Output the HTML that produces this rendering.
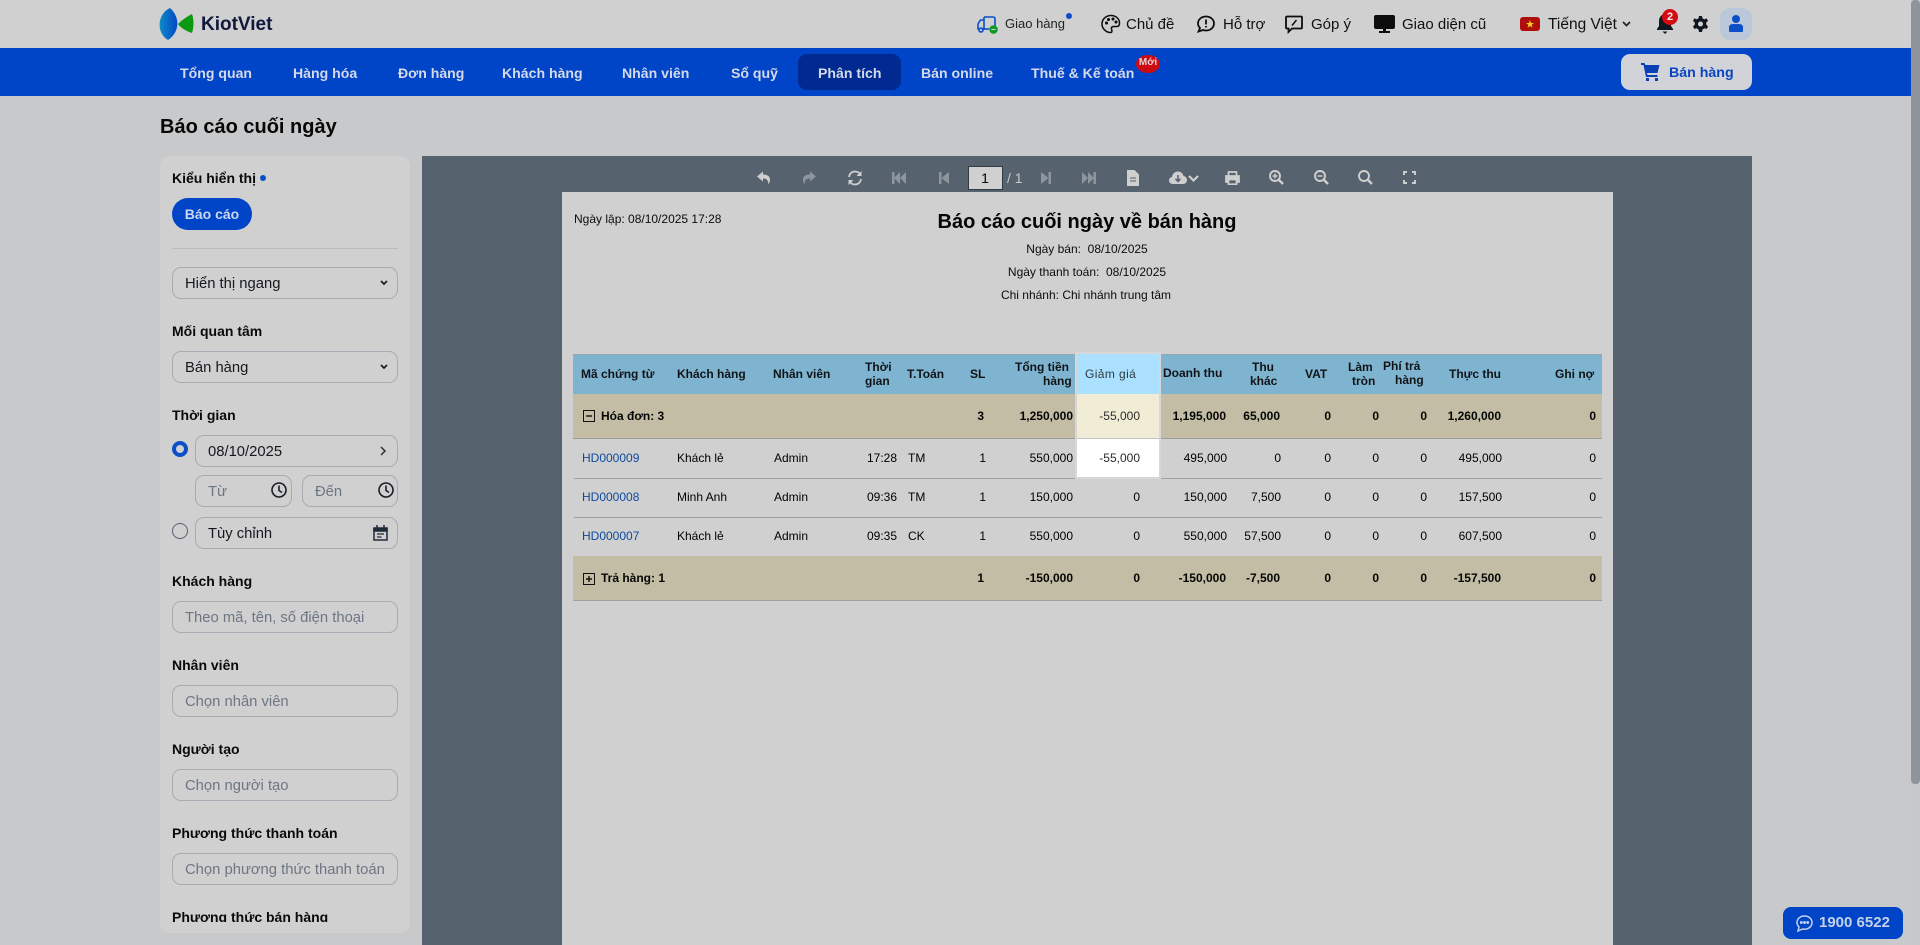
<!DOCTYPE html>
<html lang="vi"><head><meta charset="utf-8"><title>Báo cáo cuối ngày</title>
<style>
*{box-sizing:border-box}
html,body{margin:0;padding:0;width:1920px;height:945px;overflow:hidden;background:#c8c9cb;font-family:"Liberation Sans",Arial,sans-serif;color:#0d0d0d}
.box{position:absolute}
.t{position:absolute;white-space:nowrap;line-height:20px;height:20px}
svg{position:absolute;overflow:visible}
.nav{font-size:14.1px;font-weight:bold;color:#d4dae9;top:63px}
.top{font-size:15px;top:15px;color:#111}
.lb{font-size:14px;font-weight:bold;color:#0a0a0a;left:172px}
.inp{position:absolute;border:1px solid #a8abb3;border-radius:9px;height:32px;font-size:14.8px;line-height:32px;padding-left:12px;white-space:nowrap;color:#15181d}
.inp.d{line-height:33px}
.ph{color:#6d7683}
.rp{font-size:12px;color:#0c0c0c}
.h{position:absolute;font-size:12px;font-weight:bold;line-height:14px;height:14px;white-space:nowrap;color:#101418}
.r{position:absolute;left:0;width:1920px;height:20px;line-height:20px;font-size:12px;color:#000}
.r span{position:absolute;white-space:nowrap}
.b span{font-weight:bold;color:#050505}
.b span.g{font-weight:normal;color:#2c2c2c}
.b .dt,.b .tt,.b .th{margin-right:1px}
.sl{right:934px}.tg{right:847px}.gi{right:780px}.gh{color:#2a2a2a}.dt{right:693px}.th{right:639px}.va{right:589px}.la{right:541px}.ph2{right:493px}.tt{right:418px}.gn{right:324px}
.ma{left:582px;color:#0d4a9c}.kh{left:677px}.nv{left:774px}.tm{right:1023px}.to{left:908px}
</style></head><body>

<!-- top bar -->
<div class="box" style="left:0;top:0;width:1920px;height:48px;background:#d0d0d0"></div>
<svg style="left:0;top:0" width="300" height="48">
<defs><linearGradient id="lg" x1="0" x2="1" y1="0" y2="0"><stop offset="0" stop-color="#0f8cc4"/><stop offset="1" stop-color="#0048c8"/></linearGradient></defs>
<path d="M170 8C157 14 156 33 168 40C179 33 181 18 170 8Z" fill="url(#lg)"/>
<path d="M192 14C186 17 181 21 178 24C181 28 186 31 192 33C194 27 194 20 192 14Z" fill="#0a9a12"/>
</svg>
<div class="t" style="left:201px;top:15px;font-size:19px;font-weight:bold;color:#10183c">KiotViet</div>

<svg style="left:977px;top:14px" width="22" height="20" fill="none" stroke="#0a4fc8" stroke-width="1.6"><path d="M7 3H16Q18 3 18 5V12"/><path d="M7 3V15H4.500"/><path d="M7 6H3.500L1 10V15H2"/><circle cx="4" cy="16" r="2"/><path d="M7 15H12"/><circle cx="16.500" cy="15.500" r="3.500" fill="#0e9a24" stroke="#0e9a24"/><path d="M14.500 15.500H18.500" stroke="#d0d0d0" stroke-width="1"/></svg>
<div class="t" style="left:1005px;top:14px;font-size:13px;color:#222">Giao hàng</div>
<div class="box" style="left:1066px;top:13px;width:6px;height:6px;border-radius:50%;background:#0a4fc8"></div>

<svg style="left:1101px;top:14px" width="20" height="20" fill="none" stroke="#0d0d0d" stroke-width="1.500"><path d="M10 1.500C4.500 1.500 1 5.500 1 10C1 14.500 5 18.500 9.500 18.500C11.500 18.500 11 16.500 10.500 15C10 13 11.500 12.500 13 12.500H16C18 12.500 18.500 11 18.500 9C18.500 5 15 1.500 10 1.500Z"/><circle cx="5.500" cy="9" r=".8" fill="#0d0d0d"/><circle cx="7.500" cy="5.500" r=".8" fill="#0d0d0d"/><circle cx="12" cy="5" r=".8" fill="#0d0d0d"/><circle cx="15" cy="8" r=".8" fill="#0d0d0d"/></svg>
<div class="t top" style="left:1126px">Chủ đề</div>

<svg style="left:1197px;top:15px" width="18" height="18" fill="none" stroke="#0d0d0d" stroke-width="1.800"><path d="M9 1.500C4.500 1.500 1 4.500 1 8.500C1 10.500 2 12 3 13L1.500 16.500L6 15C7 15.400 8 15.500 9 15.500C13.500 15.500 17 12.500 17 8.500C17 4.500 13.500 1.500 9 1.500Z"/><path d="M9 4.500V9.500M9 11V12.500"/></svg>
<div class="t top" style="left:1223px">Hỗ trợ</div>

<svg style="left:1285px;top:15px" width="18" height="18" fill="none" stroke="#0d0d0d" stroke-width="1.800"><path d="M2 1.500H16Q17 1.500 17 2.500V12.500Q17 13.500 16 13.500H7L3.500 17V13.500H2Q1 13.500 1 12.500V2.500Q1 1.500 2 1.500Z"/><path d="M7 10.500L11.500 5" stroke-width="1.500"/></svg>
<div class="t top" style="left:1311px">Góp ý</div>

<svg style="left:1374px;top:15px" width="21" height="18"><path d="M2 0H19Q21 0 21 2V12Q21 14 19 14H2Q0 14 0 12V2Q0 0 2 0Z" fill="#0d0d0d"/><rect x="9" y="14" width="3" height="3" fill="#0d0d0d"/><rect x="5" y="16" width="11" height="2" fill="#0d0d0d"/></svg>
<div class="t top" style="left:1402px">Giao diện cũ</div>

<div class="box" style="left:1520px;top:17px;width:20px;height:14px;border-radius:3px;background:#b00d0d"></div>
<svg style="left:1520px;top:17px" width="20" height="14"><path d="M10 3L11 6H14L11.600 7.800L12.500 10.800L10 9L7.500 10.800L8.400 7.800L6 6H9Z" fill="#f0d020"/></svg>
<div class="t top" style="left:1548px;font-size:15.500px">Tiếng Việt</div>
<svg style="left:1622px;top:21px" width="9" height="6" fill="none" stroke="#222" stroke-width="1.700"><path d="M1 1L4.500 4.500L8 1"/></svg>

<svg style="left:1656px;top:13px" width="18" height="22"><path d="M9 1C6 1 3 4 3 8V13L1 16V17H17V16L15 13V8C15 4 12 1 9 1Z" fill="#0f1720"/><path d="M6.500 18.500H11.500L9 21Z" fill="#0f1720"/></svg>
<div class="box" style="left:1662px;top:9px;width:16px;height:16px;border-radius:50%;background:#d60b12;color:#eee;font-size:11px;font-weight:bold;text-align:center;line-height:16px">2</div>

<svg style="left:1693px;top:16px" width="15" height="16"><path d="M6 0H9L9.500 2.400L11.500 3.400L13.600 2.300L15 5L13.200 6.500V8.500L15 10.500L13.600 13L11.500 12.300L9.500 13.500L9 16H6L5.500 13.500L3.500 12.300L1.400 13L0 10.500L1.800 8.500V6.500L0 5L1.400 2.300L3.500 3.400L5.500 2.400Z" fill="#10161f"/><circle cx="7.500" cy="8" r="2.500" fill="#d0d0d0"/></svg>

<div class="box" style="left:1720px;top:8px;width:32px;height:32px;border-radius:10px;background:#bac8da"></div>
<svg style="left:1729px;top:15px" width="14" height="17"><circle cx="7" cy="4" r="4" fill="#0a4fc8"/><path d="M0 16V12C0 10 2 9 4 9H10C12 9 14 10 14 12V16Q14 17 13 17H1Q0 17 0 16Z" fill="#0a4fc8"/></svg>

<!-- nav -->
<div class="box" style="left:0;top:48px;width:1920px;height:48px;background:#0044c8"></div>
<div class="box" style="left:798px;top:54px;width:103px;height:36px;border-radius:9px;background:#002a91"></div>
<div class="t nav" style="left:180px">Tổng quan</div>
<div class="t nav" style="left:293px">Hàng hóa</div>
<div class="t nav" style="left:398px">Đơn hàng</div>
<div class="t nav" style="left:502px">Khách hàng</div>
<div class="t nav" style="left:622px">Nhân viên</div>
<div class="t nav" style="left:731px">Sổ quỹ</div>
<div class="t nav" style="left:818px">Phân tích</div>
<div class="t nav" style="left:921px">Bán online</div>
<div class="t nav" style="left:1031px">Thuế &amp; Kế toán</div>
<div class="box" style="left:1136px;top:55px;width:24px;height:18px;border-radius:50%;background:#cc0a12;color:#e6d5d5;font-size:10px;font-weight:bold;text-align:center;line-height:15px">Mới</div>
<div class="box" style="left:1621px;top:54px;width:131px;height:36px;border-radius:9px;background:#d1d3d9"></div>
<svg style="left:1641px;top:62px" width="19" height="19"><path d="M0 1H3.500L4.500 3H18.500L16.500 11H6L6.500 13H16.500V15H5L2.500 3H0Z" fill="#0a3fb5"/><rect x="5" y="16" width="3" height="3" fill="#0a3fb5"/><rect x="14" y="16" width="3" height="3" fill="#0a3fb5"/></svg>
<div class="t" style="left:1669px;top:63px;font-size:14.200px;font-weight:bold;color:#0a45c0">Bán hàng</div>

<!-- title -->
<div class="t" style="left:160px;top:117px;font-size:20px;font-weight:bold;color:#070707">Báo cáo cuối ngày</div>

<!-- sidebar -->
<div class="box" style="left:160px;top:156px;width:250px;height:777px;border-radius:10px;background:#d0d0d0"></div>
<div class="t lb" style="top:168px">Kiểu hiển thị</div>
<div class="box" style="left:260px;top:175px;width:6px;height:6px;border-radius:50%;background:#0a4fc8"></div>
<div class="box" style="left:172px;top:198px;width:80px;height:32px;border-radius:16px;background:#0044c8;color:#cbd8f0;font-size:14px;font-weight:bold;text-align:center;line-height:33px">Báo cáo</div>
<div class="box" style="left:172px;top:248px;width:226px;height:1px;background:#bbbcc0"></div>

<div class="inp" style="left:172px;top:267px;width:226px">Hiển thị ngang</div>
<svg style="left:380px;top:280px" width="8" height="6" fill="none" stroke="#1a1e25" stroke-width="1.700"><path d="M1 1L4 4L7 1"/></svg>
<div class="t lb" style="top:321px">Mối quan tâm</div>
<div class="inp" style="left:172px;top:351px;width:226px">Bán hàng</div>
<svg style="left:380px;top:364px" width="8" height="6" fill="none" stroke="#1a1e25" stroke-width="1.700"><path d="M1 1L4 4L7 1"/></svg>
<div class="t lb" style="top:405px">Thời gian</div>

<div class="box" style="left:172px;top:441px;width:16px;height:16px;border-radius:50%;border:4.500px solid #0a4fc8;background:#d0d0d0"></div>
<div class="inp d" style="left:195px;top:435px;width:203px">08/10/2025</div>
<svg style="left:380px;top:446px" width="6" height="10" fill="none" stroke="#2a3038" stroke-width="1.500"><path d="M1 1L5 5L1 9"/></svg>
<div class="inp ph d" style="left:195px;top:475px;width:97px">Từ</div>
<svg style="left:271px;top:482px" width="16" height="16" fill="none" stroke="#1a1e25" stroke-width="1.600"><circle cx="8" cy="8" r="7"/><path d="M8 3.500V8.500L11 10.500"/></svg>
<div class="inp ph d" style="left:302px;top:475px;width:96px">Đến</div>
<svg style="left:378px;top:482px" width="16" height="16" fill="none" stroke="#1a1e25" stroke-width="1.600"><circle cx="8" cy="8" r="7"/><path d="M8 3.500V8.500L11 10.500"/></svg>
<div class="box" style="left:172px;top:523px;width:16px;height:16px;border-radius:50%;border:1.300px solid #55606e"></div>
<div class="inp d" style="left:195px;top:517px;width:203px">Tùy chỉnh</div>
<svg style="left:373px;top:525px" width="15" height="16" fill="none" stroke="#1f2a38" stroke-width="1.500"><path d="M1 3.500H14V15H1Z"/><path d="M1 3H14V6H1Z" fill="#1f2a38"/><path d="M4 0V3M11 0V3"/><path d="M4 9H11M4 12H8.500" stroke-width="1.200"/></svg>

<div class="t lb" style="top:571px">Khách hàng</div>
<div class="inp ph d" style="left:172px;top:601px;width:226px">Theo mã, tên, số điện thoại</div>
<div class="t lb" style="top:655px">Nhân viên</div>
<div class="inp ph" style="left:172px;top:685px;width:226px">Chọn nhân viên</div>
<div class="t lb" style="top:739px">Người tạo</div>
<div class="inp ph" style="left:172px;top:769px;width:226px">Chọn người tạo</div>
<div class="t lb" style="top:823px">Phương thức thanh toán</div>
<div class="inp ph" style="left:172px;top:853px;width:226px">Chọn phương thức thanh toán</div>
<div class="box" style="left:172px;top:905px;width:226px;height:17px;overflow:hidden"><div class="t lb" style="left:0;top:2px">Phương thức bán hàng</div></div>

<!-- report viewer -->
<div class="box" style="left:422px;top:156px;width:1330px;height:789px;background:#56626e"></div>
<div class="box" style="left:562px;top:192px;width:1051px;height:753px;background:#d0d0d0"></div>

<!-- toolbar -->
<svg style="left:757px;top:171px" width="14" height="14" fill="#cfcfcf"><path d="M6 0.500L0 5.500L6 10.500V7.500C9.500 7.500 11 8.500 11.500 13.500C14.500 8 13 3.500 6 3.500Z"/></svg>
<svg style="left:802px;top:171px" width="14" height="14" fill="#8d959d"><path d="M8 0.500L14 5.500L8 10.500V7.500C4.500 7.500 3 8.500 2.500 13.500C-.500 8 1 3.500 8 3.500Z"/></svg>
<svg style="left:847px;top:170px" width="16" height="16" fill="none" stroke="#cfcfcf" stroke-width="1.700"><path d="M2 7C2.500 3.500 5 1.500 8 1.500C10.500 1.500 12.500 3 13.500 4.500"/><path d="M14.500 1V6H9.500Z" fill="#cfcfcf" stroke="none"/><path d="M14 9C13.500 12.500 11 14.500 8 14.500C5.500 14.500 3.500 13 2.500 11.500"/><path d="M1.500 15V10H6.500Z" fill="#cfcfcf" stroke="none"/></svg>
<svg style="left:892px;top:172px" width="14" height="12" fill="#8d959d"><rect y="0" width="2.500" height="12"/><path d="M8 0V12L2 6Z"/><path d="M14 0V12L8 6Z"/></svg>
<svg style="left:939px;top:172px" width="10" height="12" fill="#8d959d"><rect y="0" width="2.500" height="12"/><path d="M10 0V12L2.500 6Z"/></svg>
<svg style="left:1041px;top:172px" width="10" height="12" fill="#8d959d"><rect x="7.500" y="0" width="2.500" height="12"/><path d="M0 0V12L7.500 6Z"/></svg>
<svg style="left:1082px;top:172px" width="14" height="12" fill="#8d959d"><rect x="11.500" y="0" width="2.500" height="12"/><path d="M0 0V12L6 6Z"/><path d="M6 0V12L12 6Z"/></svg>
<svg style="left:1127px;top:170px" width="12" height="16"><path d="M0 0H7.500L12 4.500V16H0Z" fill="#cfcfcf"/><path d="M3 8H9M3 11H9" stroke="#56626e" stroke-width="1"/></svg>
<svg style="left:1169px;top:171px" width="18" height="13"><path d="M4 13C1.500 13 0 11.500 0 9.500C0 7.500 1.500 6.200 3 6C3.300 3 5.500 0.500 9 0.500C12 0.500 14 2.500 14.500 5C16.500 5.300 18 7 18 9C18 11.500 16 13 14 13Z" fill="#cfcfcf"/><path d="M9 4V10M6.500 7.700L9 10.500L11.500 7.700" stroke="#56626e" stroke-width="1.500" fill="none"/></svg>
<svg style="left:1188px;top:175px" width="11" height="7" fill="none" stroke="#cfcfcf" stroke-width="2.200"><path d="M1 1L5.500 5.500L10 1"/></svg>
<svg style="left:1225px;top:171px" width="15" height="14" fill="none" stroke="#cfcfcf" stroke-width="1.700"><path d="M3.500 4.500V1H11.500V4.500"/><path d="M3.500 11H1V5H14V11H11.500" fill="#cfcfcf"/><path d="M3.500 8.500H11.500V13.200H3.500Z" fill="#56626e"/></svg>
<svg style="left:1269px;top:170px" width="15" height="15" fill="none" stroke="#cfcfcf" stroke-width="1.900"><circle cx="6" cy="6" r="5"/><path d="M9.500 9.500L14 14" stroke-width="2.400"/><path d="M3.500 6H8.500M6 3.500V8.500" stroke-width="1.500"/></svg>
<svg style="left:1314px;top:170px" width="15" height="15" fill="none" stroke="#cfcfcf" stroke-width="1.900"><circle cx="6" cy="6" r="5"/><path d="M9.500 9.500L14 14" stroke-width="2.400"/><path d="M3.500 6H8.500" stroke-width="1.500"/></svg>
<svg style="left:1358px;top:170px" width="15" height="15" fill="none" stroke="#cfcfcf" stroke-width="1.900"><circle cx="6" cy="6" r="5"/><path d="M9.500 9.500L14 14" stroke-width="2.400"/></svg>
<svg style="left:1403px;top:171px" width="13" height="13" fill="none" stroke="#cfcfcf" stroke-width="1.900"><path d="M1 4V1H4M9 1H12V4M12 9V12H9M4 12H1V9"/></svg>
<div class="box" style="left:968px;top:166px;width:35px;height:24px;background:#d0d0d0;border:1px solid #333a42;text-align:center;font-size:14px;line-height:22px;color:#000;padding-right:1px">1</div>
<div class="t" style="left:1007px;top:168px;font-size:14px;color:#c8c8c8">/ 1</div>

<!-- report header -->
<div class="t rp" style="left:574px;top:209px">Ngày lập: 08/10/2025 17:28</div>
<div class="t" style="left:787px;width:600px;text-align:center;top:212px;font-size:20px;font-weight:bold;color:#050505">Báo cáo cuối ngày về bán hàng</div>
<div class="t rp" style="left:787px;width:600px;text-align:center;top:239px">Ngày bán:&nbsp; 08/10/2025</div>
<div class="t rp" style="left:787px;width:600px;text-align:center;top:262px">Ngày thanh toán:&nbsp; 08/10/2025</div>
<div class="t rp" style="left:786px;width:600px;text-align:center;top:285px">Chi nhánh: Chi nhánh trung tâm</div>

<!-- table backgrounds -->
<div class="box" style="left:573px;top:354px;width:1029px;height:40px;background:#7fb4d0"></div>
<div class="box" style="left:573px;top:354px;width:1029px;height:1px;background:#8fa8b5"></div>
<div class="box" style="left:573px;top:394px;width:1029px;height:44px;background:#c2bda4"></div>
<div class="box" style="left:573px;top:438px;width:1029px;height:1px;background:#9c9c9c"></div>
<div class="box" style="left:574px;top:478px;width:1028px;height:1px;background:#a0a0a0"></div>
<div class="box" style="left:574px;top:517px;width:1028px;height:1px;background:#a0a0a0"></div>
<div class="box" style="left:573px;top:556px;width:1029px;height:44px;background:#c2bda4"></div>
<div class="box" style="left:573px;top:600px;width:1029px;height:1px;background:#a0a0a0"></div>

<!-- highlighted column -->
<div class="box" style="left:1075px;top:352px;width:86px;height:127px;background:#d7d7d7"></div>
<div class="box" style="left:1077px;top:354px;width:82px;height:40px;background:#abe1ff"></div>
<div class="box" style="left:1077px;top:394px;width:82px;height:44px;background:#f1ecd6"></div>
<div class="box" style="left:1077px;top:438px;width:82px;height:1px;background:#c4c4c4"></div>
<div class="box" style="left:1077px;top:439px;width:82px;height:38px;background:#fff"></div>

<!-- header text -->
<div class="h" style="left:581px;top:367px">Mã chứng từ</div>
<div class="h" style="left:677px;top:367px">Khách hàng</div>
<div class="h" style="left:773px;top:367px">Nhân viên</div>
<div class="h" style="left:865px;top:360px">Thời</div>
<div class="h" style="left:865px;top:374px">gian</div>
<div class="h" style="left:907px;top:367px">T.Toán</div>
<div class="h" style="left:970px;top:367px">SL</div>
<div class="h" style="left:1015px;top:360px">Tổng tiền</div>
<div class="h" style="left:1043px;top:374px">hàng</div>
<div class="h" style="left:1085px;top:367px;font-weight:normal;color:#2b3a44;letter-spacing:.4px">Giảm giá</div>
<div class="h" style="left:1163px;top:366px">Doanh thu</div>
<div class="h" style="left:1252px;top:360px">Thu</div>
<div class="h" style="left:1250px;top:374px">khác</div>
<div class="h" style="left:1305px;top:367px">VAT</div>
<div class="h" style="left:1348px;top:360px">Làm</div>
<div class="h" style="left:1352px;top:374px">tròn</div>
<div class="h" style="left:1383px;top:359px">Phí trả</div>
<div class="h" style="left:1395px;top:373px">hàng</div>
<div class="h" style="left:1449px;top:367px">Thực thu</div>
<div class="h" style="left:1555px;top:367px">Ghi nợ</div>

<!-- group row 1 -->
<div class="r b" style="top:406px">
<span style="left:601px">Hóa đơn: 3</span>
<span class="sl" style="margin-right:2px">3</span><span class="tg">1,250,000</span><span class="gi g">-55,000</span><span class="dt">1,195,000</span><span class="th">65,000</span><span class="va">0</span><span class="la">0</span><span class="ph2">0</span><span class="tt">1,260,000</span><span class="gn">0</span>
</div>
<svg style="left:583px;top:410px" width="12" height="12" fill="none" stroke="#111" stroke-width="1"><rect x=".5" y=".5" width="11" height="11"/><path d="M3 6H9" stroke-width="1.400"/></svg>

<!-- rows -->
<div class="r" style="top:448px"><span class="ma">HD000009</span><span class="kh">Khách lẻ</span><span class="nv">Admin</span><span class="tm">17:28</span><span class="to">TM</span><span class="sl">1</span><span class="tg">550,000</span><span class="gi gh">-55,000</span><span class="dt">495,000</span><span class="th">0</span><span class="va">0</span><span class="la">0</span><span class="ph2">0</span><span class="tt">495,000</span><span class="gn">0</span></div>
<div class="r" style="top:487px"><span class="ma">HD000008</span><span class="kh">Minh Anh</span><span class="nv">Admin</span><span class="tm">09:36</span><span class="to">TM</span><span class="sl">1</span><span class="tg">150,000</span><span class="gi">0</span><span class="dt">150,000</span><span class="th">7,500</span><span class="va">0</span><span class="la">0</span><span class="ph2">0</span><span class="tt">157,500</span><span class="gn">0</span></div>
<div class="r" style="top:526px"><span class="ma">HD000007</span><span class="kh">Khách lẻ</span><span class="nv">Admin</span><span class="tm">09:35</span><span class="to">CK</span><span class="sl">1</span><span class="tg">550,000</span><span class="gi">0</span><span class="dt">550,000</span><span class="th">57,500</span><span class="va">0</span><span class="la">0</span><span class="ph2">0</span><span class="tt">607,500</span><span class="gn">0</span></div>

<!-- group row 2 -->
<div class="r b" style="top:568px">
<span style="left:601px">Trả hàng: 1</span>
<span class="sl" style="margin-right:2px">1</span><span class="tg">-150,000</span><span class="gi">0</span><span class="dt">-150,000</span><span class="th">-7,500</span><span class="va">0</span><span class="la">0</span><span class="ph2">0</span><span class="tt">-157,500</span><span class="gn">0</span>
</div>
<svg style="left:583px;top:573px" width="12" height="12" fill="none" stroke="#111" stroke-width="1"><rect x=".5" y=".5" width="11" height="11"/><path d="M3 6H9M6 3V9" stroke-width="1.400"/></svg>

<!-- hotline -->
<div class="box" style="left:1783px;top:907px;width:120px;height:32px;border-radius:8px;background:#0044c8"></div>
<svg style="left:1796px;top:915px" width="17" height="17" fill="none" stroke="#c5d2ea" stroke-width="1.500"><path d="M8.500 1C4 1 1 4 1 7.500C1 9.500 2 11 3 12L2 16L6.500 14C7 14.100 8 14.200 8.500 14.200C13 14.200 16 11 16 7.500C16 4 13 1 8.500 1Z"/><circle cx="5.300" cy="7.500" r=".7" fill="#c5d2ea"/><circle cx="8.500" cy="7.500" r=".7" fill="#c5d2ea"/><circle cx="11.700" cy="7.500" r=".7" fill="#c5d2ea"/></svg>
<div class="t" style="left:1819px;top:913px;font-size:15px;font-weight:bold;color:#c5d2ea">1900 6522</div>

<!-- scrollbar -->
<div class="box" style="left:1911px;top:0;width:9px;height:945px;background:#c6c7c9"></div>
<div class="box" style="left:1911px;top:0;width:9px;height:784px;border-radius:4px;background:#8f939b"></div>
</body></html>
